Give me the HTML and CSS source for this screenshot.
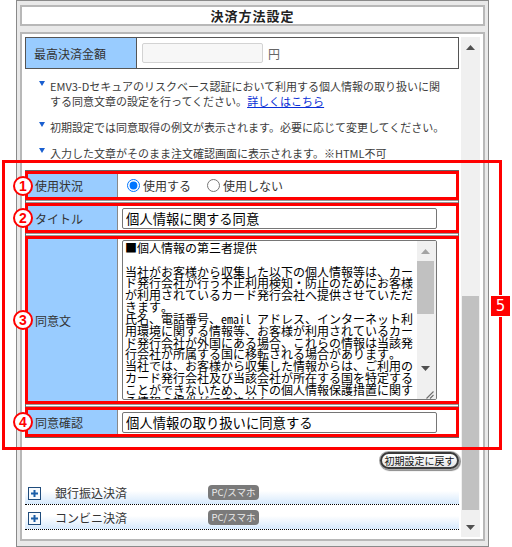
FILE: index.html
```html
<!DOCTYPE html>
<html lang="ja">
<head>
<meta charset="utf-8">
<title>決済方法設定</title>
<link rel="stylesheet" href="styles.css">
</head>
<body>
<div class="page">
  <div class="frame">
    <div class="title">決済方法設定</div>
    <div class="panel">
      <div class="scroll">
        <div class="amount">
          <div class="amount-label">最高決済金額</div>
          <div class="amount-value"><input class="amount-input" type="text" disabled><span class="yen">円</span></div>
        </div>
        <ul class="notes">
          <li><span>EMV3-Dセキュアのリスクベース認証において利用する個人情報の取り扱いに関する同意文章の設定を行ってください。<a class="link" href="#">詳しくはこちら</a></span></li>
          <li><span>初期設定では同意取得の例文が表示されます。必要に応じて変更してください。</span></li>
          <li><span>入力した文章がそのまま注文確認画面に表示されます。※HTML不可</span></li>
        </ul>
        <div class="consent">
          <div class="row r-status">
            <span class="num">1</span>
            <div class="row-label">使用状況</div>
            <div class="row-value radios">
              <label class="radio"><input type="radio" name="use" checked>使用する</label>
              <label class="radio"><input type="radio" name="use">使用しない</label>
            </div>
          </div>
          <div class="row r-title">
            <span class="num">2</span>
            <div class="row-label">タイトル</div>
            <div class="row-value"><input class="field" type="text" value="個人情報に関する同意"></div>
          </div>
          <div class="row r-body">
            <span class="num">3</span>
            <div class="row-label">同意文</div>
            <div class="row-value">
              <div class="body-box">
                <textarea class="body-text">■個人情報の第三者提供

当社がお客様から収集した以下の個人情報等は、カード発行会社が行う不正利用検知・防止のためにお客様が利用されているカード発行会社へ提供させていただきます。
氏名、電話番号、email アドレス、インターネット利用環境に関する情報等、お客様が利用されているカード発行会社が外国にある場合、これらの情報は当該発行会社が所属する国に移転される場合があります。
当社では、お客様から収集した情報からは、ご利用のカード発行会社及び当該会社が所在する国を特定することができないため、以下の個人情報保護措置に関する情報の提供ができません。</textarea>
                <div class="ta-bar">
                  <div class="ta-btn ta-up"><svg width="9" height="5" viewBox="0 0 9 5"><path d="M0 5L4.5 0L9 5Z" fill="#a3a3a3"/></svg></div>
                  <div class="ta-thumb"></div>
                  <div class="ta-track"></div>
                  <div class="ta-btn ta-down"><svg width="9" height="5" viewBox="0 0 9 5"><path d="M0 0L4.5 5L9 0Z" fill="#505050"/></svg></div>
                  <div class="ta-corner"><svg width="10" height="10" viewBox="0 0 10 10"><path d="M9.5 2.5L2.5 9.5M9.5 6L6 9.5" stroke="#6e6e6e" stroke-width="1.1"/></svg></div>
                </div>
              </div>
            </div>
          </div>
          <div class="row r-confirm">
            <span class="num">4</span>
            <div class="row-label">同意確認</div>
            <div class="row-value"><input class="field" type="text" value="個人情報の取り扱いに同意する"></div>
          </div>
        </div>
        <div class="reset-row"><button class="reset-btn" type="button">初期設定に戻す</button></div>
        <div class="methods">
          <div class="method">
            <svg class="plus" width="13" height="13" viewBox="0 0 13 13"><rect x="0.5" y="0.5" width="12" height="12" fill="#f7fafd" stroke="#1f4c7c"/><path d="M3 6.5H10M6.5 3V10" stroke="#1b5ea8" stroke-width="2"/></svg>
            <span class="method-name">銀行振込決済</span>
            <span class="platform">PC/スマホ</span>
          </div>
          <div class="method">
            <svg class="plus" width="13" height="13" viewBox="0 0 13 13"><rect x="0.5" y="0.5" width="12" height="12" fill="#f7fafd" stroke="#1f4c7c"/><path d="M3 6.5H10M6.5 3V10" stroke="#1b5ea8" stroke-width="2"/></svg>
            <span class="method-name">コンビニ決済</span>
            <span class="platform">PC/スマホ</span>
          </div>
        </div>
      </div>
      <div class="vbar">
        <div class="vbar-btn"><svg width="9" height="5" viewBox="0 0 9 5"><path d="M0 5L4.5 0L9 5Z" fill="#505050"/></svg></div>
        <div class="vbar-track"><div class="vbar-thumb"></div></div>
        <div class="vbar-btn"><svg width="9" height="5" viewBox="0 0 9 5"><path d="M0 0L4.5 5L9 0Z" fill="#505050"/></svg></div>
      </div>
    </div>
  </div>
  <div class="callout"><span class="callout-num">5</span></div>
</div>
</body>
</html>
```

FILE: styles.css
```css
* { box-sizing: border-box; }
html, body { margin: 0; padding: 0; }
body {
  width: 512px;
  height: 547px;
  overflow: hidden;
  background: #fff;
  font-family: "Noto Sans CJK JP", sans-serif;
  color: #333;
}
.page { position: relative; width: 512px; height: 547px; }

.frame {
  margin-left: 16px;
  width: 473px;
  height: 547px;
  border: 1px solid #8a8a8a;
  background: #e9e9e9;
  padding: 4px 3px 5px;
}
.title {
  height: 21px;
  border: 2px solid #b8b8b8;
  background: #fff;
  text-align: center;
  font-size: 13px;
  font-weight: 700;
  line-height: 17px;
  letter-spacing: 1px;
  color: #222;
}
.panel {
  margin-top: 6px;
  height: 509px;
  border: 2px solid #b8b8b8;
  background: #fff;
  display: flex;
  padding: 3px 3px 2px 3px;
}
.scroll { width: 434px; height: 500px; flex: none; }

.vbar {
  margin-left: 2px;
  width: 19px;
  height: 500px;
  background: #f0f0f0;
  display: flex;
  flex-direction: column;
  flex: none;
}
.vbar-btn { height: 20px; flex: none; display: flex; align-items: center; justify-content: center; }
.vbar-track { flex: 1; }
.vbar-thumb { margin: 239px 1px 0; height: 214px; background: #c1c1c1; }

/* amount row */
.amount {
  display: grid;
  grid-template-columns: 111px 1fr;
  height: 32px;
  border: 1px solid #555;
}
.amount-label {
  background: #99ccff;
  border-right: 1px solid #555;
  padding-left: 8px;
  display: flex;
  align-items: center;
  font-size: 12px;
  color: #333;
}
.amount-value { display: flex; align-items: center; padding-left: 5px; font-size: 12px; }
.amount-input {
  width: 121px;
  height: 20px;
  margin: 0;
  padding: 0;
  border: 1px solid #d3d3d3;
  border-radius: 2px;
  background: #f7f7f7;
}
.yen { margin-left: 5px; color: #666; }

/* notes */
.notes {
  list-style: none;
  margin: 10px 0 0;
  padding: 0 12px 0 14px;
  font-size: 11px;
  line-height: 15px;
  color: #3c3c3c;
}
.notes li { display: flex; }
.notes li + li { margin-top: 11px; }
.notes li::before {
  content: "";
  flex: none;
  width: 0;
  height: 0;
  border-left: 3px solid transparent;
  border-right: 3px solid transparent;
  border-top: 5px solid #1a5fd0;
  margin: 2px 5px 0 0;
}
.link { color: #0a2fd6; text-decoration: underline; }

/* consent form */
.consent { margin-top: 9px; border: 1px solid #666; }
.row {
  position: relative;
  display: grid;
  grid-template-columns: 92px 1fr;
  border-bottom: 3px double #9a9a9a;
}
.row:last-child { border-bottom: 0; }
.row::after {
  content: "";
  position: absolute;
  top: 0;
  bottom: 0;
  left: -1px;
  right: -1px;
  border: 3px solid #f00;
  pointer-events: none;
  z-index: 1;
}
.r-status { height: 32px; }
.r-title { height: 33px; }
.r-body { height: 171px; }
.r-confirm { height: 30px; }
.row-label {
  background: #99ccff;
  border-right: 1px solid #888;
  padding-left: 9px;
  display: flex;
  align-items: center;
  font-size: 12px;
  color: #333;
}
.row-value { padding-left: 4px; display: flex; align-items: center; }
.num {
  position: absolute;
  left: -13px;
  top: 50%;
  margin-top: -10px;
  width: 20px;
  height: 20px;
  border: 2px solid #f00;
  border-radius: 50%;
  background: #fff;
  color: #f00;
  font: bold 14px/16px "Liberation Sans", sans-serif;
  text-align: center;
  z-index: 2;
}
.radios { font-size: 12px; color: #333; }
.radio { display: flex; align-items: center; }
.radio input { margin: 0 3px 0 5px; width: 13px; height: 13px; }
.radio + .radio { margin-left: 11px; }
.field {
  width: 315px;
  height: 21px;
  margin: 0;
  border: 1px solid #767676;
  border-radius: 2px;
  padding: 0 3px;
  font-family: "Noto Sans CJK JP", sans-serif;
  font-size: 13.333px;
  color: #000;
  background: #fff;
}
.body-box {
  display: flex;
  width: 315px;
  height: 160px;
  border: 1px solid #767676;
  border-radius: 2px;
  background: #fff;
  overflow: hidden;
}
.body-text {
  flex: 1;
  min-width: 0;
  margin: 0;
  border: 0;
  padding: 1px 2px;
  resize: none;
  overflow: hidden;
  outline: none;
  background: transparent;
  font-family: "Noto Sans Mono CJK JP", "Noto Sans CJK JP", monospace;
  font-size: 12px;
  line-height: 11.83px;
  color: #000;
}
.ta-bar {
  width: 19px;
  flex: none;
  display: flex;
  flex-direction: column;
  padding-right: 2px;
  background: #f0f0f0;
}
.ta-btn { flex: none; display: flex; align-items: center; justify-content: center; }
.ta-up { height: 20px; }
.ta-thumb { height: 53px; flex: none; background: #c1c1c1; }
.ta-track { flex: 1; }
.ta-down { height: 17px; }
.ta-corner { height: 22px; flex: none; display: flex; align-items: flex-end; justify-content: flex-end; }

/* reset */
.reset-row { display: flex; justify-content: flex-end; margin-top: 14px; }
.reset-btn {
  width: 79px;
  height: 17px;
  margin: 0;
  padding: 0;
  border: 2px solid #3a3a3a;
  border-radius: 9px;
  box-shadow: 0 0 0 1px #a8a8a8, 1px 1px 1px 1px #8a8a8a;
  background: linear-gradient(#ffffff, #e6e6e6);
  font-family: "Noto Sans CJK JP", sans-serif;
  font-size: 10px;
  line-height: 13px;
  color: #111;
  text-align: center;
}

/* payment methods */
.methods { margin-top: 11px; }
.method {
  height: 25px;
  display: flex;
  align-items: center;
  border-bottom: 1px dotted #000;
  background: linear-gradient(#ffffff 45%, #d6e9fc);
}
.plus { margin: 3px 0 0 3px; flex: none; }
.method-name { margin-left: 14px; width: 153px; font-size: 12px; color: #333; }
.platform {
  width: 51px;
  height: 15px;
  border-radius: 4px;
  background: #7a7a7a;
  color: #ececec;
  font-size: 9.5px;
  line-height: 15px;
  text-align: center;
}

/* annotation */
.callout {
  position: absolute;
  left: 2px;
  top: 160px;
  width: 500px;
  height: 290px;
  border: 3px solid #f00;
  pointer-events: none;
}
.callout-num {
  position: absolute;
  right: -12px;
  top: 132px;
  width: 21px;
  height: 22px;
  background: #f00;
  color: #fff;
  border: 1px solid #fff;
  font: 15px/20px "DejaVu Sans", sans-serif;
  text-align: center;
}
```
